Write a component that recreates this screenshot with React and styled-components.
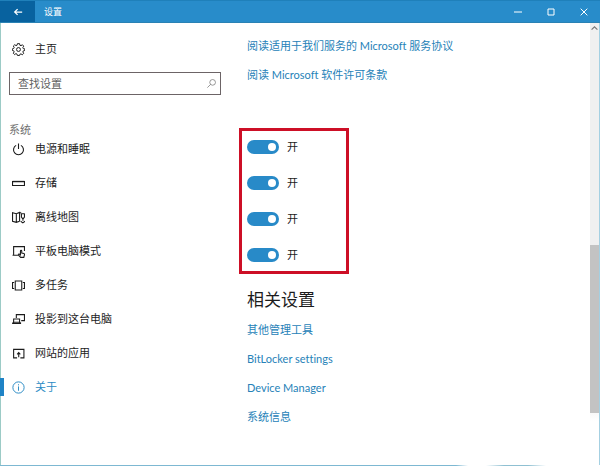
import React from "react";
import styled, { createGlobalStyle } from "styled-components";

const GlobalStyle = createGlobalStyle`
  * {
    box-sizing: border-box;
  }
  body {
    margin: 0;
    background-color: #ffffff;
    color: #1c1c1c;
    font-family: Lato, "Noto Sans CJK SC", sans-serif;
    font-size: 11px;
    line-height: 16px;
    font-variant-ligatures: none;
  }
  button,
  input {
    font: inherit;
    color: inherit;
  }
`;

const Window = styled.div`
  display: flex;
  flex-direction: column;
  min-height: 100vh;
`;

const TitleBar = styled.header`
  display: flex;
  height: 23px;
  background-color: #288cca;
  border-top: 1px solid #1f80ba;
  border-bottom: 1px solid #2a82b4;
  color: #ffffff;
`;

const BackButton = styled.button`
  display: flex;
  align-items: center;
  justify-content: center;
  width: 35px;
  padding: 0;
  border: 0;
  background-color: #08629f;
  color: #ffffff;
`;

const WindowTitle = styled.h1`
  flex: 1;
  margin: 0;
  padding-left: 9px;
  font-size: 9px;
  line-height: 21px;
  font-weight: 400;
`;

const WindowButton = styled.button`
  display: flex;
  align-items: center;
  justify-content: center;
  width: 33px;
  padding: 0;
  border: 0;
  background: none;
  color: #ffffff;
`;

const Body = styled.div`
  display: flex;
  flex: 1;
  border-left: 1px solid #9ccbc6;
  border-right: 1px solid #a4d0e2;
`;

const BottomEdge = styled.div`
  height: 1px;
  background: linear-gradient(
    to right,
    #7db8d2 76%,
    #ffffff 78%,
    #ffffff 81%,
    #8fc0d2 84%,
    #8fc0d2 88%,
    #ffffff 91%
  );
`;

const Sidebar = styled.aside`
  flex: 0 0 228px;
  padding-top: 9px;
`;

const NavLink = styled.a`
  display: flex;
  align-items: center;
  gap: 10px;
  height: 34px;
  margin-left: -1px;
  color: ${({ $active }) => ($active ? "#2b8bc4" : "#1c1c1c")};
  text-decoration: none;
  svg {
    flex: none;
    margin-left: -2px;
  }
  &::before {
    content: "";
    width: 4px;
    height: 18px;
    background-color: ${({ $active }) => ($active ? "#1f83c6" : "transparent")};
  }
`;

const SearchBox = styled.label`
  display: flex;
  align-items: center;
  height: 23px;
  margin: 6px 8px 0;
  padding-right: 4px;
  border: 1px solid #6c6466;
  color: #777777;
`;

const SearchInput = styled.input`
  flex: 1;
  min-width: 0;
  padding: 0 8px;
  border: 0;
  outline: 0;
  background: none;
  &::placeholder {
    color: #5f5f5f;
    opacity: 1;
  }
`;

const GroupTitle = styled.h2`
  margin: 27px 0 0 8px;
  color: #6f6f6f;
  font-size: 11px;
  line-height: 16px;
  font-weight: 400;
`;

const NavList = styled.ul`
  margin: -6px 0 0;
  padding: 0;
  list-style: none;
`;

const Main = styled.main`
  flex: 1;
  padding: 8px 18px 0;
`;

const LinkList = styled.ul`
  margin: 0;
  padding: 0;
  list-style: none;
`;

const LinkItem = styled.li`
  display: flex;
  align-items: center;
  height: 29px;
`;

const TextLink = styled.a`
  color: #2682b8;
  text-decoration: none;
`;

const ToggleGroup = styled.div`
  display: flex;
  flex-direction: column;
  gap: 20px;
  width: 110px;
  margin: 39px 0 0 -8px;
  padding: 8px 5px;
  border: 3px solid #cd0f26;
`;

const ToggleRow = styled.label`
  display: flex;
  align-items: center;
  gap: 8px;
  height: 16px;
`;

const Switch = styled.input`
  display: flex;
  align-items: center;
  appearance: none;
  width: 32px;
  height: 14px;
  margin: 0;
  padding: 0 3px;
  border-radius: 7px;
  background-color: #999999;
  &::before {
    content: "";
    width: 8px;
    height: 8px;
    border-radius: 50%;
    background-color: #ffffff;
  }
  &:checked {
    justify-content: flex-end;
    background-color: #288ac8;
  }
`;

const SectionTitle = styled.h2`
  margin: 14px 0 3px;
  font-size: 17px;
  line-height: 24px;
  font-weight: 400;
`;

const ScrollBar = styled.div`
  display: flex;
  flex-direction: column;
  width: 9px;
  background: linear-gradient(#f0f0f0 86%, #ffffff 90%);
  color: #777777;
`;

const ScrollUp = styled.button`
  display: flex;
  align-items: center;
  justify-content: center;
  height: 10px;
  padding: 0;
  border: 0;
  background: none;
`;

const ScrollTrack = styled.div`
  flex: 1;
  display: grid;
  grid-template-rows: 49fr 39fr 12fr;
`;

const ScrollThumb = styled.div`
  grid-row: 2;
  background-color: #c3c3c3;
`;

const Icon = ({ size = 13, width = 1, children }) => (
  <svg
    width={size}
    height={size}
    viewBox="0 0 12 12"
    fill="none"
    stroke="currentColor"
    strokeWidth={width}
    aria-hidden="true"
  >
    {children}
  </svg>
);

const GearIcon = () => (
  <Icon width={0.9}>
    <path d="M5 .6h2l.3 1.5 1 .4 1.3-.9 1.2 1.3-.8 1.3.4 1 1.4.2v1.5l-1.4.4-.4 1 .8 1.2-1.3 1.4-1.2-.9-1 .4L7 11.5H5l-.4-1.3-1-.4-1.2.9L1.2 9.4l.8-1.2-.4-1L.3 6.9V5.4l1.3-.4.4-1-.8-1.2 1.3-1.2 1.2.8 1-.4z" />
    <circle cx="6" cy="6" r="1.8" />
  </Icon>
);

const PowerIcon = () => (
  <Icon>
    <path d="M3.8 2.200a4.6 4.6 0 1 0 4.4 0M6 .5v5" />
  </Icon>
);

const StorageIcon = () => (
  <Icon>
    <path d="M.5 4.200h11v3.600H.5z" />
    <path d="M.5 4.200h11" strokeWidth="1.3" />
  </Icon>
);

const MapIcon = () => (
  <Icon>
    <path d="M7 9.500 4 10.500l-3.500-1v-8l3.500 1 3-1.200V9.500M4 2.500v8M7 1.300l1.500.4" />
    <path d="M8 2.500h3.800M8.700 2.500v3l1.400 2 1.400-2v-3M10.100 7.500v1.500M8 9.500l2 1.500 2-1.500" />
  </Icon>
);

const TabletIcon = () => (
  <Icon>
    <path d="M5.500 9.500H.5M1.500 9.500v-8h10v4" />
    <path d="M7.800 9V5.500c0-.9 1.200-.9 1.200 0v1.900l2 .5c.5.200.6.700.5 1.200l-.6 2.300H8L6 9.300c-.5-.9.7-1.300 1.800-.3z" />
  </Icon>
);

const TaskIcon = () => (
  <Icon>
    <path d="M3 1.900h6v8.200H3zM2 3.200H.5v5.600H2M10 3.200h1.500v5.600H10" />
  </Icon>
);

const ProjectIcon = () => (
  <Icon>
    <path d="M4 4.500V1.500h7.500v5.500H8.500M1.500 9V5.500h5.500V9M.3 9.700h8" />
    <path d="M.3 9.700 1.500 8.500H7l1.300 1.200" />
  </Icon>
);

const WebAppIcon = () => (
  <Icon>
    <path d="M3.500 10h-2V2h9.500v8H9M1.500 2.300h9.500M6.200 9.500V5.200M4.700 6.700l1.500-1.500 1.500 1.500M3.500 10h1.200M7.700 10H9" />
  </Icon>
);

const InfoIcon = () => (
  <Icon width={0.9}>
    <circle cx="6" cy="6" r="5.2" />
    <path d="M6 5v4M6 3v1" />
  </Icon>
);

const navItems = [
  { label: "电源和睡眠", icon: PowerIcon },
  { label: "存储", icon: StorageIcon },
  { label: "离线地图", icon: MapIcon },
  { label: "平板电脑模式", icon: TabletIcon },
  { label: "多任务", icon: TaskIcon },
  { label: "投影到这台电脑", icon: ProjectIcon },
  { label: "网站的应用", icon: WebAppIcon },
  { label: "关于", icon: InfoIcon, active: true },
];

const licenseLinks = [
  "阅读适用于我们服务的 Microsoft 服务协议",
  "阅读 Microsoft 软件许可条款",
];

const relatedLinks = [
  "其他管理工具",
  "BitLocker settings",
  "Device Manager",
  "系统信息",
];

const Links = ({ items }) => (
  <LinkList>
    {items.map((text) => (
      <LinkItem key={text}>
        <TextLink href="#">{text}</TextLink>
      </LinkItem>
    ))}
  </LinkList>
);

const App = () => {
  return (
    <>
      <GlobalStyle />
      <Window>
        <TitleBar>
          <BackButton>
            <Icon size={10} width={1.5}>
              <path d="M11 6H2M5.500 2.500 2 6l3.500 3.500" />
            </Icon>
          </BackButton>
          <WindowTitle>设置</WindowTitle>
          <WindowButton>
            <Icon size={8} width={1.5}>
              <path d="M0 6h12" />
            </Icon>
          </WindowButton>
          <WindowButton>
            <Icon size={8} width={1.5}>
              <path d="M1.500 1.500h9v9h-9z" />
            </Icon>
          </WindowButton>
          <WindowButton>
            <Icon size={8} width={1.5}>
              <path d="m1 1 10 10M11 1 1 11" />
            </Icon>
          </WindowButton>
        </TitleBar>
        <Body>
          <Sidebar>
            <NavLink href="#">
              <GearIcon />
              主页
            </NavLink>
            <SearchBox>
              <SearchInput type="text" placeholder="查找设置" />
              <Icon size={9}>
                <circle cx="7.5" cy="4.5" r="3.8" />
                <path d="M4.800 7.200.500 11.500" />
              </Icon>
            </SearchBox>
            <GroupTitle>系统</GroupTitle>
            <NavList>
              {navItems.map(({ label, icon: ItemIcon, active }) => (
                <li key={label}>
                  <NavLink href="#" $active={active}>
                    <ItemIcon />
                    {label}
                  </NavLink>
                </li>
              ))}
            </NavList>
          </Sidebar>
          <Main>
            <Links items={licenseLinks} />
            <ToggleGroup>
              {[1, 2, 3, 4].map((id) => (
                <ToggleRow key={id}>
                  <Switch type="checkbox" role="switch" defaultChecked />
                  开
                </ToggleRow>
              ))}
            </ToggleGroup>
            <SectionTitle>相关设置</SectionTitle>
            <Links items={relatedLinks} />
          </Main>
          <ScrollBar>
            <ScrollUp>
              <Icon size={7} width={2}>
                <path d="m1 8 5-5 5 5" />
              </Icon>
            </ScrollUp>
            <ScrollTrack>
              <ScrollThumb />
            </ScrollTrack>
          </ScrollBar>
        </Body>
        <BottomEdge />
      </Window>
    </>
  );
};

export default App;
